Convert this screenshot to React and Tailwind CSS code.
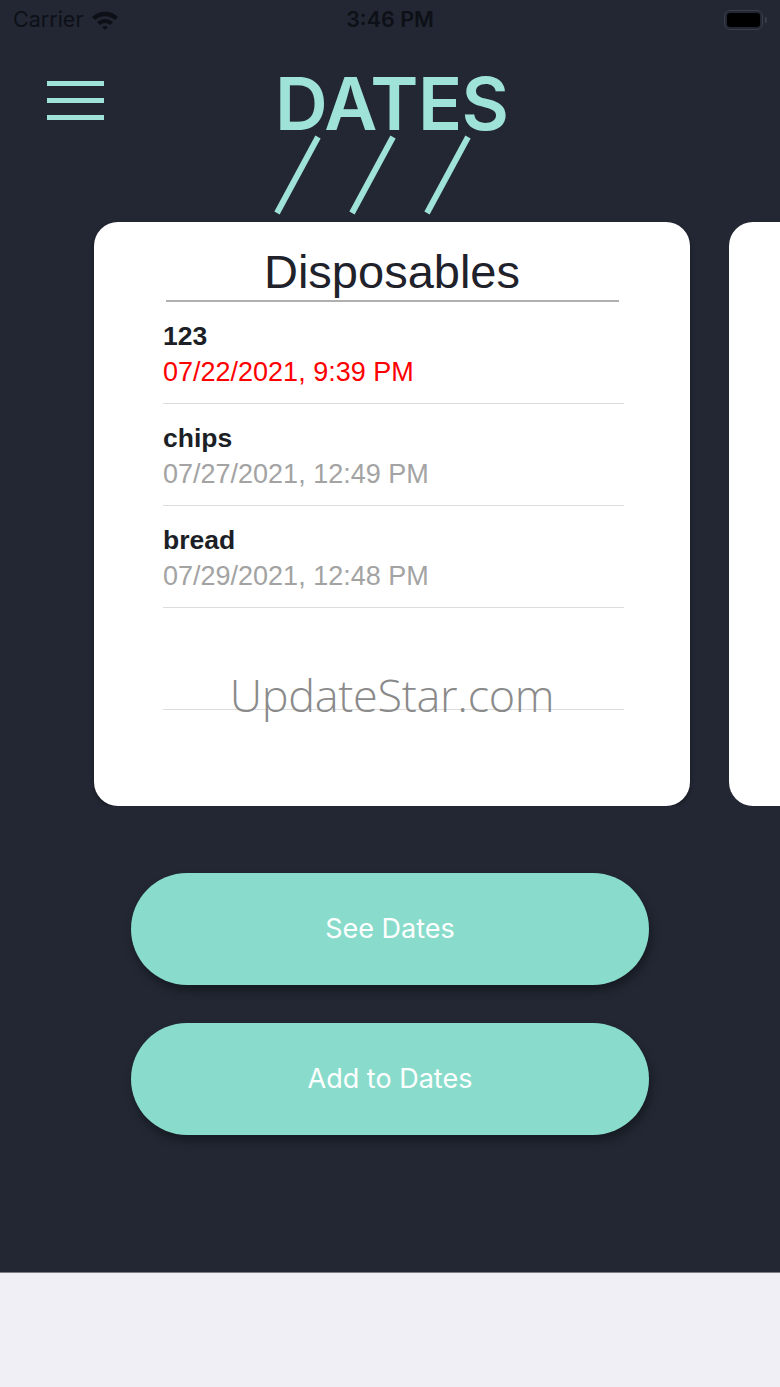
import React from "react";

const ITEMS = [
  { name: "123", date: "07/22/2021, 9:39 PM", overdue: true },
  { name: "chips", date: "07/27/2021, 12:49 PM", overdue: false },
  { name: "bread", date: "07/29/2021, 12:48 PM", overdue: false },
];

const helv = { fontFamily: '"Liberation Sans", Arial, sans-serif' };
const sf = { fontFamily: 'Inter, "Liberation Sans", sans-serif' };

function StatusBar() {
  return (
    <div className="h-10 grid grid-cols-3 items-center px-[13px] text-[#0e1017]" style={sf}>
      <div className="flex items-center gap-[7px]">
        <span className="text-[21.5px] leading-none">Carrier</span>
        <svg width="30" height="22" viewBox="0 0 30 22">
          <path d="M2 8 A19 19 0 0 1 28 8 L25 11 A15 15 0 0 0 5 11 Z" fill="#0e1017" />
          <path d="M7 13 A12 12 0 0 1 23 13 L20 16 A8 8 0 0 0 10 16 Z" fill="#0e1017" />
          <path d="M12 18 A5 5 0 0 1 18 18 L15 21 Z" fill="#0e1017" />
        </svg>
      </div>
      <div className="text-center text-[21.5px] font-semibold leading-none">3:46 PM</div>
      <div className="flex justify-end items-center gap-[2px]">
        <div className="w-[39px] h-[20px] rounded-[6px] border border-[#3a3e49] p-[2px]">
          <div className="w-full h-full rounded-[3px] bg-black" />
        </div>
        <div className="w-[2px] h-[6px] rounded-r bg-[#3a3e49]" />
      </div>
    </div>
  );
}

function Header() {
  return (
    <div className="h-[182px] flex items-start">
      <div className="ml-[47px] mt-[41px] flex flex-col gap-[12px]">
        <div className="h-[5px] w-[57px] bg-[#9fe3d8]" />
        <div className="h-[5px] w-[57px] bg-[#9fe3d8]" />
        <div className="h-[5px] w-[57px] bg-[#9fe3d8]" />
      </div>
      <div className="ml-[171px] mt-[27px] flex flex-col">
        <div className="text-[73px] leading-none font-semibold text-[#9fe3d8] tracking-[-0.6px]" style={sf}>
          DATES
        </div>
        <svg className="-ml-[7px] -mt-[8px]" width="210" height="86" viewBox="0 0 210 86">
          <g stroke="#9fe3d8" strokeWidth="6">
            <line x1="9" y1="81" x2="50" y2="5" />
            <line x1="84" y1="81" x2="125" y2="5" />
            <line x1="159" y1="81" x2="200" y2="5" />
          </g>
        </svg>
      </div>
    </div>
  );
}

function Card() {
  return (
    <div className="relative w-[596px] h-[584px] shrink-0 rounded-[24px] bg-white pt-[22px] shadow-[0_2px_4px_rgba(0,0,0,0.35)]" style={helv}>
      <div className="text-center text-[47px] leading-[56px] text-[#1f222a]">Disposables</div>
      <div className="ml-[72px] w-[453px] h-[2px] bg-[#b0b0b0]" />
      <div className="ml-[69px] w-[461px]">
        {ITEMS.map((item) => (
          <div key={item.name} className="border-b border-[#dcdcdc] pt-[16px] pb-[13px]">
            <div className="text-[26.5px] leading-[36px] font-bold text-[#1c1f26]">{item.name}</div>
            <div className={`text-[27px] leading-[36px] ${item.overdue ? "text-[#ff0000]" : "text-[#a3a3a3]"}`}>
              {item.date}
            </div>
          </div>
        ))}
        <div className="h-[102px] border-b border-[#dcdcdc]" />
      </div>
      <div
        className="absolute left-0 right-0 top-[450px] text-center text-[45px] leading-none font-light tracking-[-0.3px] text-[#8a8a8a]"
        style={{ fontFamily: '"Open Sans", sans-serif' }}
      >
        UpdateStar.com
      </div>
    </div>
  );
}

function Button({ children }) {
  return (
    <button
      className="w-[518px] h-[112px] rounded-full bg-[#89dccb] text-white text-[27px] shadow-[2px_6px_10px_rgba(0,0,0,0.35)]"
      style={sf}
    >
      {children}
    </button>
  );
}

export default function App() {
  return (
    <div className="w-[780px] h-[1387px] flex flex-col overflow-hidden">
      <div className="h-[1272px] bg-[#222733]">
        <StatusBar />
        <Header />
        <div className="flex gap-[39px] pl-[94px] overflow-hidden">
          <Card />
          <div className="w-[596px] h-[584px] shrink-0 rounded-[24px] bg-white" />
        </div>
        <div className="mt-[67px] ml-[131px] flex flex-col gap-[38px]">
          <Button>See Dates</Button>
          <Button>Add to Dates</Button>
        </div>
      </div>
      <div className="flex-1 border-t border-[#7b7e86] bg-[#f0eff5]" />
    </div>
  );
}
